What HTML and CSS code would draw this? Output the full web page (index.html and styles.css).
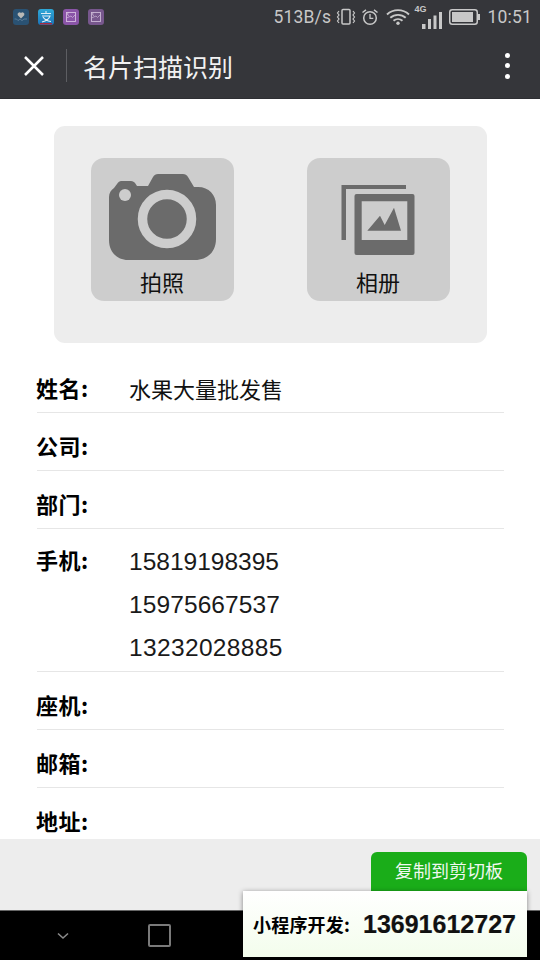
FILE: index.html
```html
<!DOCTYPE html>
<html lang="zh">
<head>
<meta charset="utf-8">
<title>名片扫描识别</title>
<link rel="stylesheet" href="styles.css">
</head>
<body>
<div class="screen">
  <header class="appbar">
    <div class="status">
      <div class="apps">
        <svg class="app" viewBox="0 0 16 16"><rect width="16" height="16" rx="3" fill="#2a5273"/><path d="M8 9.500 4.800 6.300a2 2 0 0 1 3.200-2.300 2 2 0 0 1 3.200 2.300z" fill="#b9b9b6"/><path d="M1.500 10h2l1.500 1.600 2-1.600 2 1.600 2-1.600h3" fill="none" stroke="#6f8ca3" stroke-width=".7"/></svg>
        <svg class="app" viewBox="0 0 16 16"><defs><linearGradient id="ali" x1="0" y1="0" x2="0" y2="1"><stop offset="0" stop-color="#2fa9d8"/><stop offset="1" stop-color="#1b73b8"/></linearGradient></defs><rect width="16" height="16" rx="3" fill="url(#ali)"/><path d="M3 4.500h10M8 2v2.500M4 7h8c-1 3-4 5-8 6M5 8c1.500 2.500 4 4 8 4.500" fill="none" stroke="#dfeef6" stroke-width="1.100"/><rect x="2" y="14" width="12" height="1.500" fill="#a82a40"/></svg>
        <svg class="app" viewBox="0 0 16 16"><rect width="16" height="16" rx="3" fill="#8a55a8"/><rect x="3.500" y="3.500" width="9" height="9" fill="none" stroke="#d5bde0" stroke-width=".9"/><path d="M3.500 9 8 7l1.500 1.500 3-3M6 3.500a1.500 1.500 0 0 0 0 3" fill="none" stroke="#d5bde0" stroke-width=".7"/></svg>
        <svg class="app" viewBox="0 0 16 16"><rect width="16" height="16" rx="3" fill="#77578d"/><rect x="3.500" y="3.500" width="9" height="9" fill="none" stroke="#cbb8d6" stroke-width=".9"/><path d="M3.500 9 8 7l1.500 1.500 3-3M6 3.500a1.500 1.500 0 0 0 0 3" fill="none" stroke="#cbb8d6" stroke-width=".7"/></svg>
      </div>
      <div class="sys">
        <span class="speed">513B/s</span>
        <svg class="ic-vib" viewBox="0 0 20 18"><rect x="6" y="1.500" width="8" height="14.500" rx="1" fill="none" stroke="#c8c8c8" stroke-width="1.500"/><path d="M3 3 1.500 5l1.500 2-1.500 2 1.500 2-1.500 2 1.500 2M17 3l1.500 2L17 7l1.500 2-1.500 2 1.500 2-1.500 2" fill="none" stroke="#c8c8c8" stroke-width="1.200"/></svg>
        <svg class="ic-alarm" viewBox="0 0 18 18"><circle cx="9" cy="10" r="6.300" fill="none" stroke="#c8c8c8" stroke-width="1.500"/><path d="M9 6v4.300h3.300" fill="none" stroke="#c8c8c8" stroke-width="1.300"/><path d="M1.500 4.500 5 1.800M16.500 4.500 13 1.800" fill="none" stroke="#c8c8c8" stroke-width="1.500"/></svg>
        <svg class="ic-wifi" viewBox="0 0 24 16"><path d="M1 5.500a16 16 0 0 1 22 0M4.300 8.800a11.500 11.500 0 0 1 15.400 0M7.500 11.800a6.800 6.800 0 0 1 9 0" fill="none" stroke="#c8c8c8" stroke-width="1.900"/><circle cx="12" cy="14.300" r="1.700" fill="#c8c8c8"/></svg>
        <div class="net">
          <span class="g4">4G</span>
          <svg class="ic-bars" viewBox="0 0 20 17"><rect x="0" y="12" width="3.500" height="5" fill="#c8c8c8"/><rect x="6" y="7" width="3" height="10" fill="#c8c8c8"/><rect x="11.500" y="3.500" width="3" height="13.500" fill="#c8c8c8"/><rect x="17" y="0" width="3" height="17" fill="#c8c8c8"/></svg>
        </div>
        <svg class="ic-batt" viewBox="0 0 31 16"><rect x=".75" y=".75" width="27.500" height="14.500" rx="2.500" fill="none" stroke="#c8c8c8" stroke-width="1.500"/><rect x="3" y="3" width="21" height="10" fill="#c8c8c8"/><rect x="29" y="5" width="2" height="6" fill="#c8c8c8"/></svg>
        <span class="clock">10:51</span>
      </div>
    </div>
    <div class="navrow">
      <svg class="ic-close" viewBox="0 0 22 22"><path d="M2 2 20 20M20 2 2 20" stroke="#fff" stroke-width="2.500" fill="none"/></svg>
      <span class="divider"></span>
      <h1 class="title">名片扫描识别</h1>
      <span class="dots"><i></i><i></i><i></i></span>
    </div>
  </header>

  <main class="content">
    <section class="panel">
      <button class="tile">
        <svg class="ic-camera" viewBox="109 174 107 86">
          <path fill="#6b6b6b" d="M148 186l5-9c1-2 3-3 5-3h25c2 0 4 1 5 3l6 10 4 0c11 0 18 8 18 18v34c0 13-9 21-21 21h-67c-11 0-19-8-19-20v-43c0-4 2-7 5-9l3-4c1-2 3-3 4-3h10c2 0 3 1 4 2l2 3z"/>
          <circle cx="167" cy="219" r="24.500" fill="none" stroke="#cdcdcd" stroke-width="9.500"/>
          <circle cx="125" cy="195" r="6" fill="#cdcdcd"/>
        </svg>
        <span class="tile-label">拍照</span>
      </button>
      <button class="tile">
        <svg class="ic-album" viewBox="341 185 74 70">
          <path fill="#6b6b6b" d="M341.500 185H406v4h-60v51h-4.500z"/>
          <path fill="#6b6b6b" fill-rule="evenodd" d="M356.500 194h56a2 2 0 0 1 2 2v57a2 2 0 0 1-2 2h-56a2 2 0 0 1-2-2v-57a2 2 0 0 1 2-2zM361.700 201.300V240h45.600v-38.700z"/>
          <path fill="#6b6b6b" d="M367.300 230.700 380 215.700l4.700 9.300 9.300-17.300 7 23z"/>
        </svg>
        <span class="tile-label">相册</span>
      </button>
    </section>

    <section class="fields">
      <div class="row"><span class="key">姓名:</span><div class="val">水果大量批发售</div></div>
      <div class="row"><span class="key">公司:</span><div class="val"></div></div>
      <div class="row"><span class="key">部门:</span><div class="val"></div></div>
      <div class="row row-multi"><span class="key">手机:</span><div class="val phones"><div>15819198395</div><div>15975667537</div><div>13232028885</div></div></div>
      <div class="row"><span class="key">座机:</span><div class="val"></div></div>
      <div class="row"><span class="key">邮箱:</span><div class="val"></div></div>
      <div class="row"><span class="key">地址:</span><div class="val"></div></div>
    </section>
  </main>

  <footer class="actions">
    <button class="copy">复制到剪切板</button>
  </footer>

  <nav class="sysnav">
    <svg class="ic-chev" viewBox="0 0 12 8"><path d="M1 1.500 6 6l5-4.500" fill="none" stroke="#8a8a8a" stroke-width="1.600"/></svg>
    <span class="ic-square"></span>
  </nav>

  <aside class="promo"><span class="promo-k">小程序开发:</span><span class="promo-v">13691612727</span></aside>
</div>
</body>
</html>
```
FILE: styles.css
```css
* { box-sizing: border-box; }
html, body { margin: 0; padding: 0; }
body { font-family: "Noto Sans CJK SC", "Liberation Sans", sans-serif; background: #fff; }
.screen { position: relative; width: 540px; height: 960px; overflow: hidden; display: flex; flex-direction: column; }

.appbar { height: 99px; background: #35363a; flex: none; border-bottom: 1px solid #2e2f33; }
.status { height: 33px; display: flex; justify-content: space-between; align-items: center; padding: 0 8px 0 13px; }
.apps { display: flex; gap: 9px; }
.app { width: 16px; height: 16px; display: block; }
.sys { display: flex; align-items: center; color: #c8c8c8; }
.speed { font: 17.500px/20px Roboto, sans-serif; width: 63px; letter-spacing: .2px; }
.clock { font: 17.500px/20px Roboto, sans-serif; margin-left: 7px; letter-spacing: .2px; }
.ic-vib { width: 20px; height: 18px; margin-right: 5px; }
.ic-alarm { width: 18px; height: 18px; margin-right: 7px; }
.ic-wifi { width: 24px; height: 16px; margin-right: 4px; }
.net { position: relative; width: 27px; height: 25px; margin-right: 8px; }
.g4 { position: absolute; left: 0; top: 0; font: bold 9px/11px "Liberation Sans", sans-serif; }
.ic-bars { position: absolute; right: -1px; bottom: 0; width: 20px; height: 17px; }
.ic-batt { width: 31px; height: 16px; }

.navrow { height: 65px; display: flex; align-items: center; padding: 0 0 0 23px; position: relative; }
.ic-close { width: 22px; height: 22px; flex: none; }
.divider { width: 1px; height: 33px; background: #5d5e62; margin-left: 21px; flex: none; }
.title { margin: 0 0 0 16px; font-size: 25px; font-weight: 400; color: #f2f2f2; flex: 1; line-height: 34px; }
.dots { display: flex; flex-direction: column; gap: 5.500px; margin-right: 30px; }
.dots i { width: 5px; height: 5px; border-radius: 50%; background: #fff; display: block; }

.content { flex: 1; min-height: 0; overflow: hidden; padding-top: 27px; }
.panel { width: 433px; height: 217px; margin-left: 54px; background: #ededed; border-radius: 11px; display: flex; gap: 73px; padding: 32px 0 0 37px; }
.tile { width: 143px; height: 143px; padding: 16px 0 0; border: 0; border-radius: 13px; background: #cdcdcd; display: flex; flex-direction: column; align-items: center; font-family: inherit; }
.ic-camera { width: 107px; height: 86px; display: block; }
.ic-album { width: 74px; height: 70px; margin-top: 11px; margin-left: -2px; display: block; }
.tile-label { font-size: 22px; line-height: 30px; color: #111; margin-top: 6px; margin-left: -1px; }
.ic-album + .tile-label { margin-top: 11px; }

.fields { padding: 12px 36px 0 37px; }
.row { display: flex; padding: 12px 0 2px; border-bottom: 1px solid #e6e6e6; min-height: 58px; font-size: 22px; line-height: 43px; color: #111; }
.row-multi { padding-top: 10px; min-height: 143px; }
.row:first-child { height: 58px; }
.row:last-child { border-bottom: 0; }
.key { width: 92px; flex: none; font-weight: 700; color: #000; margin: -1px 0 0 -1px; padding-right: 1px; box-sizing: content-box; letter-spacing: .5px; }
.val { flex: 1; font-family: "Noto Sans CJK SC", sans-serif; line-height: 42px; }
.phones { font: 24.500px/43px "Liberation Sans", sans-serif; color: #1a1a1a; padding-top: 1px; }
.phones div:nth-child(2) { letter-spacing: .1px; }
.phones div:nth-child(3) { letter-spacing: .35px; }

.actions { height: 71px; flex: none; background: #ededed; padding: 13px 13px 0 0; display: flex; justify-content: flex-end; }
.copy { width: 156px; height: 60px; border: 0; border-radius: 6px 6px 0 0; padding: 0 0 23px; background: #1aad19; color: #f1f8f1; font: 18px/37px "Noto Sans CJK SC", sans-serif; }

.sysnav { height: 50px; flex: none; background: #000; border-top: 1px solid #666; display: flex; align-items: center; padding-left: 57px; }
.ic-chev { width: 12px; height: 8px; display: block; }
.ic-square { width: 23px; height: 23px; border: 2px solid #7a7a7a; border-radius: 2px; margin-left: 79px; }

.promo { position: absolute; left: 243px; top: 891px; width: 284px; height: 66px; display: flex; align-items: center; padding: 0 0 0 10px; background: linear-gradient(#fff, #f3fdec); box-shadow: 0 1px 5px rgba(0,0,0,.45); color: #000; }
.promo-k { font-size: 18px; font-weight: 700; width: 110px; flex: none; white-space: nowrap; letter-spacing: .2px; }
.promo-v { font: bold 25px/30px "Liberation Sans", sans-serif; color: #111; -webkit-text-stroke: .2px #111; }
```
